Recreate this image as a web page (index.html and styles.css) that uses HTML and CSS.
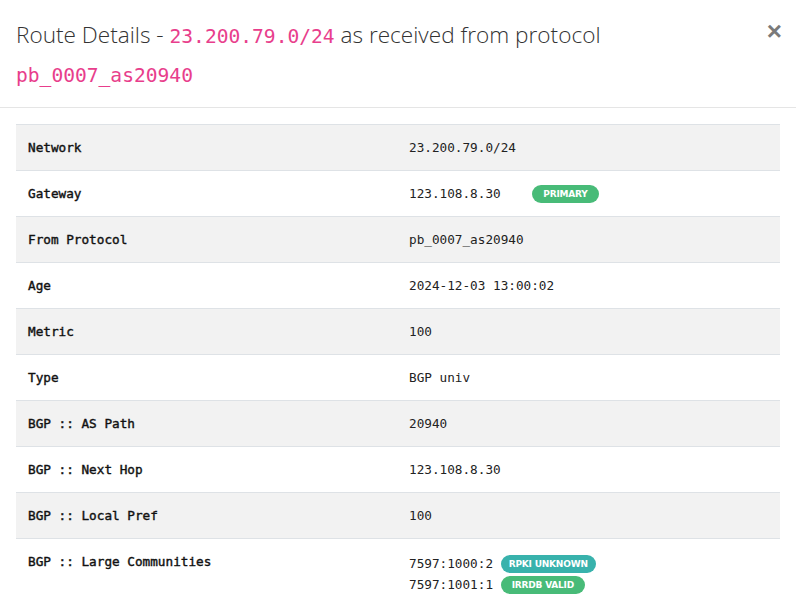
FILE: index.html
```html
<!DOCTYPE html>
<html>
<head>
<meta charset="utf-8">
<link rel="stylesheet" href="styles.css">
</head>
<body>
<div class="modal">
  <div class="modal-header">
    <h4 class="modal-title">Route Details - <code>23.200.79.0/24</code> as received from protocol <code>pb_0007_as20940</code></h4>
    <button class="close" type="button">&times;</button>
  </div>
  <div class="modal-body">
    <table class="details">
      <tbody>
        <tr><th>Network</th><td>23.200.79.0/24</td></tr>
        <tr><th>Gateway</th><td>123.108.8.30 <span class="badge green gw">PRIMARY</span></td></tr>
        <tr><th>From Protocol</th><td>pb_0007_as20940</td></tr>
        <tr><th>Age</th><td>2024-12-03 13:00:02</td></tr>
        <tr><th>Metric</th><td>100</td></tr>
        <tr><th>Type</th><td>BGP univ</td></tr>
        <tr><th>BGP :: AS Path</th><td>20940</td></tr>
        <tr><th>BGP :: Next Hop</th><td>123.108.8.30</td></tr>
        <tr><th>BGP :: Local Pref</th><td>100</td></tr>
        <tr><th>BGP :: Large Communities</th><td>
          <div class="comms">
            <div class="comm">7597:1000:2 <span class="badge teal">RPKI UNKNOWN</span></div>
            <div class="comm">7597:1001:1 <span class="badge green">IRRDB VALID</span></div>
          </div>
        </td></tr>
      </tbody>
    </table>
  </div>
</div>
</body>
</html>
```

FILE: styles.css
```css
html, body {
  margin: 0;
  padding: 0;
  background: #fff;
}
.modal {
  width: 796px;
  font-family: "Open Sans", sans-serif;
  color: #212529;
}
.modal-header {
  display: flex;
  align-items: flex-start;
  justify-content: space-between;
  padding: 16px 16px 13px 16px;
  border-bottom: 1px solid #e5e5e5;
}
.modal-title {
  margin: 0;
  font-size: 22.6px;
  font-weight: 300;
  line-height: 37px;
  color: #333;
  width: 640px;
}
.modal-title code {
  font-family: "DejaVu Sans Mono", monospace;
  font-size: 19.6px;
  color: #e83e8c;
  font-weight: normal;
}
.close {
  border: 0;
  background: none;
  padding: 0;
  margin: 5px -2px 0 0;
  font-family: "Liberation Sans", sans-serif;
  font-size: 26px;
  font-weight: bold;
  line-height: 20px;
  color: #7a7a7a;
}
.modal-body {
  padding: 16px;
}
.details {
  width: 100%;
  border-collapse: collapse;
  font-family: "DejaVu Sans Mono", monospace;
  font-size: 12.7px;
  color: #222;
}
.details th, .details td {
  text-align: left;
  vertical-align: top;
  padding: 12px;
  line-height: 21px;
  border-top: 1px solid #dee2e6;
}
.details th {
  width: 357px;
  font-weight: normal;
  color: #111;
  -webkit-text-stroke: 0.4px #111;
}
.details td {
  font-weight: normal;
}
.details tr:nth-child(odd) {
  background: #f2f2f2;
}
.comms {
  padding-top: 2px;
}
.comm {
  line-height: 21px;
}
.badge {
  display: inline-block;
  font-family: "DejaVu Sans", sans-serif;
  font-size: 9px;
  font-weight: bold;
  letter-spacing: -0.2px;
  color: #fff;
  line-height: 18px;
  padding: 0 8px;
  border-radius: 9px;
  vertical-align: 1px;
}
.badge.green { background: #48bb78; }
.badge.teal { background: #38b2ac; }
.badge.gw { margin-left: 24px; padding: 0 11px; }
.comm .badge.green { padding: 0 11px; }
```
